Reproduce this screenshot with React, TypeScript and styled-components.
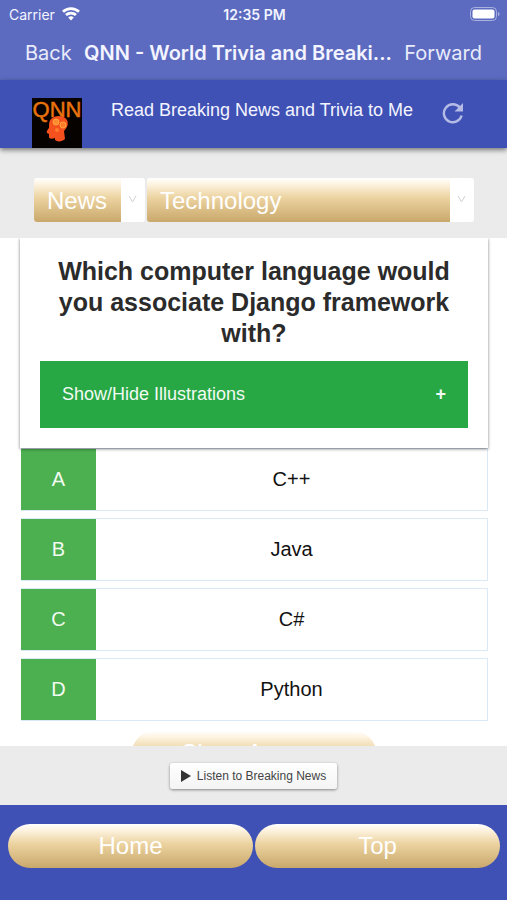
import React from "react";
import styled, { createGlobalStyle } from "styled-components";

const gold = "linear-gradient(#ffffff 0%, #fdf3e0 14%, #ecd3a0 45%, #c9a86b 100%)";
const sans = '"Liberation Sans", Arial, sans-serif';
const system = 'Inter, "Liberation Sans", sans-serif';

const GlobalStyle = createGlobalStyle`
  * { box-sizing: border-box; }
  body { margin: 0; background: #fff; font-family: ${sans}; }
  button, select { font-family: inherit; }
`;

const Screen = styled.div`
  display: flex;
  flex-direction: column;
  height: 100vh;
  overflow: hidden;
`;

const SystemBar = styled.header`
  flex: none;
  background: #5c6bc0;
  color: #f3f4ff;
  font-family: ${system};
`;

const StatusRow = styled.div`
  display: grid;
  grid-template-columns: 1fr auto 1fr;
  align-items: center;
  height: 28px;
  padding: 0 7px 0 9px;
  font-size: 14px;
`;

const Carrier = styled.span`
  display: flex;
  align-items: center;
  gap: 7px;
`;

const Clock = styled.span`
  font-size: 14px;
  font-weight: 600;
`;

const BatteryIcon = styled.svg`
  justify-self: end;
`;

const NavRow = styled.nav`
  display: flex;
  align-items: center;
  justify-content: space-between;
  height: 52px;
  padding: 0 25px 3px;
`;

const NavButton = styled.button`
  padding: 0;
  border: 0;
  background: none;
  color: #e9ebfb;
  font-size: 20px;
  white-space: nowrap;
`;

const Title = styled.h1`
  margin: 0;
  font-size: 20px;
  font-weight: 600;
  white-space: nowrap;
`;

const Header = styled.div`
  position: relative;
  z-index: 1;
  flex: none;
  display: flex;
  align-items: flex-start;
  justify-content: space-between;
  height: 68px;
  padding: 18px 43px 0 32px;
  background: #3f51b5;
  box-shadow: 0 2px 5px rgba(0, 0, 0, 0.5);
`;

const HeaderLink = styled.a`
  padding-top: 2px;
  color: #f3f4ff;
  font-size: 18px;
  line-height: 20px;
  text-decoration: none;
  white-space: nowrap;
`;

const IconButton = styled.button`
  display: flex;
  margin-top: 4px;
  padding: 0;
  border: 0;
  background: none;
`;

const Filters = styled.form`
  flex: none;
  display: flex;
  gap: 2px;
  padding: 30px 33px 16px 34px;
  background: #ebebeb;
`;

const SelectBox = styled.label<{ $grow?: boolean }>`
  display: flex;
  flex: ${(p) => (p.$grow ? "1" : "none")};
  height: 44px;
  overflow: hidden;
  border-radius: 3px;
  background: #fff;
`;

const Select = styled.select`
  flex: 1;
  height: 44px;
  padding: 0 13px;
  border: 0;
  border-radius: 0;
  appearance: none;
  background: ${gold};
  color: #fff;
  font-size: 24px;
`;

const Arrow = styled.svg`
  flex: none;
  align-self: center;
  width: 24px;
`;

const Content = styled.main`
  flex: 1;
  min-height: 0;
  overflow: hidden;
  padding: 0 19px 0 20px;
  background: #fff;
`;

const QuestionCard = styled.section`
  position: relative;
  padding: 18px 20px 20px;
  background: #fff;
  box-shadow: 0 1px 3px rgba(0, 0, 0, 0.5);
`;

const Question = styled.h2`
  max-width: 400px;
  margin: 0 auto 12px;
  color: #2b2b2b;
  font-size: 25px;
  line-height: 31px;
  text-align: center;
`;

const Toggle = styled.button`
  display: flex;
  align-items: center;
  justify-content: space-between;
  width: 100%;
  height: 67px;
  padding: 0 22px;
  border: 0;
  background: #28a745;
  color: #f1fbf3;
  font-size: 18px;
`;

const Answers = styled.div`
  display: grid;
  gap: 7px;
  padding: 0 0 0 1px;
`;

const Answer = styled.button`
  display: grid;
  grid-template-columns: 75px 1fr;
  align-items: stretch;
  height: 63px;
  padding: 0;
  border: 1px solid #dbe8f5;
  border-left: 0;
  background: #fff;
  color: #111;
  font-size: 20px;
  line-height: 61px;
`;

const Letter = styled.span`
  background: #4caf50;
  color: #f1fbf1;
`;

const GoldButton = styled.button`
  flex: 1;
  height: 44px;
  padding: 0;
  border: 0;
  border-radius: 22px;
  background: ${gold};
  color: #fff;
  font-size: 24px;
`;

const Reveal = styled.div`
  display: flex;
  width: 244px;
  margin: 10px auto 0;
`;

const AudioBar = styled.div`
  flex: none;
  display: flex;
  justify-content: center;
  padding: 17px 0 16px;
  background: #ebebeb;
`;

const ListenButton = styled.button`
  display: flex;
  align-items: center;
  gap: 6px;
  height: 26px;
  padding: 0 11px;
  border: 0;
  border-radius: 3px;
  background: linear-gradient(#fff, #f4f4f4);
  box-shadow: 0 1px 3px rgba(0, 0, 0, 0.45);
  color: #444;
  font-size: 12px;
`;

const Footer = styled.footer`
  flex: none;
  display: flex;
  gap: 2px;
  padding: 19px 7px 32px 8px;
  background: #3f51b5;
`;

const Logo = () => (
  <svg width="50" height="50" viewBox="0 0 50 50" role="img" aria-label="QNN">
    <rect width="50" height="50" fill="#050200" />
    <text x="25" y="19" textAnchor="middle" fontFamily="Liberation Sans, Arial" fontSize="22" fill="#e8720c" stroke="#e8720c" strokeWidth="0.5">
      QNN
    </text>
    <path
      d="M19 21c4-4 13-4 16 1 2 4 0 8-3 11l1 8c-3 3-8 3-10 1l0-2c-3 1-6 1-6-1l0-3-2-1c-1-1 1-4 2-5 0-4 0-7 2-9z"
      fill="#f4511e"
    />
    <circle cx="24" cy="24" r="3" fill="#ff8a30" stroke="#ffa63d" strokeWidth="1" />
    <circle cx="31" cy="27" r="3" fill="#ff7a2b" stroke="#ffa63d" strokeWidth="1" />
    <circle cx="25" cy="32" r="2" fill="#ff7a2b" />
  </svg>
);

const Chevron = () => (
  <Arrow height="10" viewBox="0 0 24 10" aria-hidden="true">
    <path d="M8 1l3.5 6L15 1" fill="none" stroke="#d4d4d4" strokeWidth="1" />
  </Arrow>
);

const answers = [
  ["A", "C++"],
  ["B", "Java"],
  ["C", "C#"],
  ["D", "Python"],
];

export default function App() {
  return (
    <Screen>
      <GlobalStyle />
      <SystemBar>
        <StatusRow>
          <Carrier>
            Carrier
            <svg width="18" height="14" viewBox="0 0 18 14" aria-hidden="true">
              <g fill="none" stroke="#fff" strokeWidth="2.8">
                <path d="M1 4.8a11.5 11.5 0 0 1 16 0" />
                <path d="M4 8.1a7.2 7.2 0 0 1 10 0" />
              </g>
              <path d="M9 13.6L6.2 10.6a4 4 0 0 1 5.6 0z" fill="#fff" />
            </svg>
          </Carrier>
          <Clock>12:35 PM</Clock>
          <BatteryIcon width="30" height="14" viewBox="0 0 30 14" aria-hidden="true">
            <rect x="0.5" y="0.5" width="26" height="13" rx="4" fill="none" stroke="#a9b1de" />
            <rect x="2.5" y="2.5" width="22" height="9" rx="2" fill="#fff" />
            <path d="M28 5c2 .6 2 3.4 0 4z" fill="#a9b1de" />
          </BatteryIcon>
        </StatusRow>
        <NavRow>
          <NavButton type="button">Back</NavButton>
          <Title>QNN - World Trivia and Breaki...</Title>
          <NavButton type="button">Forward</NavButton>
        </NavRow>
      </SystemBar>

      <Header>
        <Logo />
        <HeaderLink href="#news">Read Breaking News and Trivia to Me</HeaderLink>
        <IconButton type="button" aria-label="Reload">
          <svg width="22" height="22" viewBox="0 0 22 22" aria-hidden="true">
            <path d="M17.8 5.5A9 9 0 1 0 19.6 13.5" fill="none" stroke="#b4bce6" strokeWidth="2.4" />
            <path d="M21 1v8.5h-8.5z" fill="#b4bce6" />
          </svg>
        </IconButton>
      </Header>

      <Filters>
        <SelectBox>
          <Select aria-label="Section" defaultValue="News">
            <option>News</option>
          </Select>
          <Chevron />
        </SelectBox>
        <SelectBox $grow>
          <Select aria-label="Topic" defaultValue="Technology">
            <option>Technology</option>
          </Select>
          <Chevron />
        </SelectBox>
      </Filters>

      <Content>
        <QuestionCard>
          <Question>Which computer language would you associate Django framework with?</Question>
          <Toggle type="button" aria-expanded="false">
            <span>Show/Hide Illustrations</span>
            <strong>+</strong>
          </Toggle>
        </QuestionCard>
        <Answers>
          {answers.map(([letter, text]) => (
            <Answer type="button" key={letter}>
              <Letter>{letter}</Letter>
              <span>{text}</span>
            </Answer>
          ))}
        </Answers>
        <Reveal>
          <GoldButton type="button">Show Answer</GoldButton>
        </Reveal>
      </Content>

      <AudioBar>
        <ListenButton type="button">
          <svg width="10" height="12" viewBox="0 0 10 12" aria-hidden="true">
            <path d="M0 0l10 6-10 6z" fill="#333" />
          </svg>
          Listen to Breaking News
        </ListenButton>
      </AudioBar>

      <Footer>
        <GoldButton type="button">Home</GoldButton>
        <GoldButton type="button">Top</GoldButton>
      </Footer>
    </Screen>
  );
}
